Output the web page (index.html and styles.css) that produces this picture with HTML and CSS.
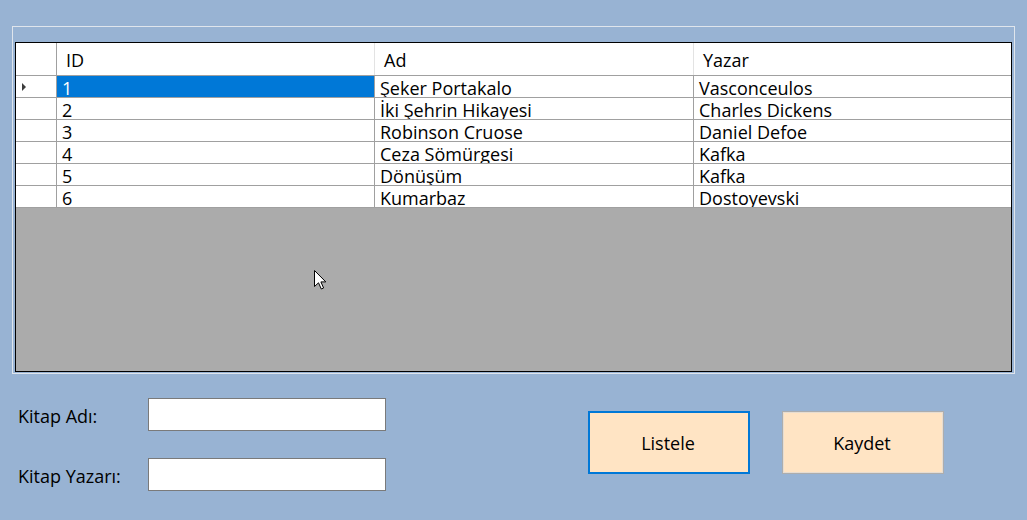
FILE: index.html
```html
<!DOCTYPE html>
<html lang="tr">
<head>
<meta charset="utf-8">
<title>Kitaplar</title>
<link rel="stylesheet" href="styles.css">
</head>
<body>
<div class="window">
  <div class="group">
    <div class="grid">
      <div class="row head">
        <div class="cell rh"></div>
        <div class="cell hc">ID</div>
        <div class="cell hc">Ad</div>
        <div class="cell hc last">Yazar</div>
      </div>
      <div class="row">
        <div class="cell rh"><span class="tri"></span></div>
        <div class="cell sel">1</div>
        <div class="cell">Şeker Portakalo</div>
        <div class="cell last">Vasconceulos</div>
      </div>
      <div class="row">
        <div class="cell rh"></div>
        <div class="cell">2</div>
        <div class="cell">İki Şehrin Hikayesi</div>
        <div class="cell last">Charles Dickens</div>
      </div>
      <div class="row">
        <div class="cell rh"></div>
        <div class="cell">3</div>
        <div class="cell">Robinson Cruose</div>
        <div class="cell last">Daniel Defoe</div>
      </div>
      <div class="row">
        <div class="cell rh"></div>
        <div class="cell">4</div>
        <div class="cell">Ceza Sömürgesi</div>
        <div class="cell last">Kafka</div>
      </div>
      <div class="row">
        <div class="cell rh"></div>
        <div class="cell">5</div>
        <div class="cell">Dönüşüm</div>
        <div class="cell last">Kafka</div>
      </div>
      <div class="row">
        <div class="cell rh"></div>
        <div class="cell">6</div>
        <div class="cell">Kumarbaz</div>
        <div class="cell last">Dostoyevski</div>
      </div>
      <div class="empty"></div>
    </div>
  </div>
  <div class="bottom">
    <div class="form">
      <label class="lbl">Kitap Adı:</label>
      <div class="input"></div>
      <label class="lbl">Kitap Yazarı:</label>
      <div class="input"></div>
    </div>
    <div class="buttons">
      <div class="btn focus">Listele</div>
      <div class="btn">Kaydet</div>
    </div>
  </div>
  <svg class="cursor" width="13" height="20" viewBox="0 0 13 20">
    <path d="M0.5 0.5 L0.5 16.5 L4.5 12.8 L7.3 19 L9.6 18 L6.9 11.9 L11.8 11.9 Z" fill="#fff" stroke="#000" stroke-width="1" stroke-linejoin="miter"/>
  </svg>
</div>
</body>
</html>
```

FILE: styles.css
```css
html, body {
  margin: 0;
  padding: 0;
}
body {
  width: 1027px;
  height: 520px;
  background: #98b3d3;
  font-family: "Open Sans", "Noto Sans", sans-serif;
  font-size: 18px;
  color: #000;
  overflow: hidden;
}
.window {
  position: relative;
  padding: 26px 12px 0 12px;
}
.group {
  border: 1px solid #dfe5ec;
  padding: 15px 2px 1px 2px;
  width: 997px;
}
.grid {
  border: 1px solid #000;
  height: 330px;
  box-sizing: border-box;
  display: flex;
  flex-direction: column;
  background: #ababab;
}
.row {
  display: grid;
  grid-template-columns: 41px 318px 319px 1fr;
  background: #fff;
  border-bottom: 1px solid #a0a0a0;
}
.cell {
  height: 21px;
  line-height: 21px;
  padding: 2px 0 0 5px;
  box-sizing: border-box;
  overflow: hidden;
  white-space: nowrap;
  border-right: 1px solid #a0a0a0;
}
.cell.last {
  border-right: none;
}
.row .rh {
  padding: 0;
  position: relative;
}
.head .cell {
  height: 32px;
  line-height: 32px;
  padding: 1px 0 0 9px;
  border-right-color: #e3e3e3;
}
.head .rh {
  border-right-color: #a0a0a0;
  padding: 0;
}
.sel {
  background: #0078d7;
  color: #fff;
}
.tri {
  position: absolute;
  left: 6px;
  top: 7px;
  width: 0;
  height: 0;
  border-top: 4px solid transparent;
  border-bottom: 4px solid transparent;
  border-left: 4px solid #3c3c3c;
}
.empty {
  flex: 1;
  background: #ababab;
}
.bottom {
  display: flex;
  align-items: flex-start;
  padding-left: 6px;
  margin-top: 24px;
}
.form {
  display: grid;
  grid-template-columns: 130px 238px;
  row-gap: 27px;
  align-items: center;
}
.lbl {
  padding-top: 3px;
}
.input {
  height: 33px;
  box-sizing: border-box;
  background: #fff;
  border: 1px solid #7a7a7a;
}
.buttons {
  display: flex;
  gap: 32px;
  margin-left: 202px;
  margin-top: 13px;
}
.btn {
  width: 162px;
  height: 63px;
  box-sizing: border-box;
  background: #ffe4c4;
  border: 1px solid #adadad;
  box-shadow: inset 0 0 0 1px #e6ddd2;
  display: flex;
  align-items: center;
  justify-content: center;
  padding-right: 2px;
}
.btn.focus {
  border: 2px solid #0078d7;
  box-shadow: none;
}
.cursor {
  position: absolute;
  left: 314px;
  top: 270px;
}
```
